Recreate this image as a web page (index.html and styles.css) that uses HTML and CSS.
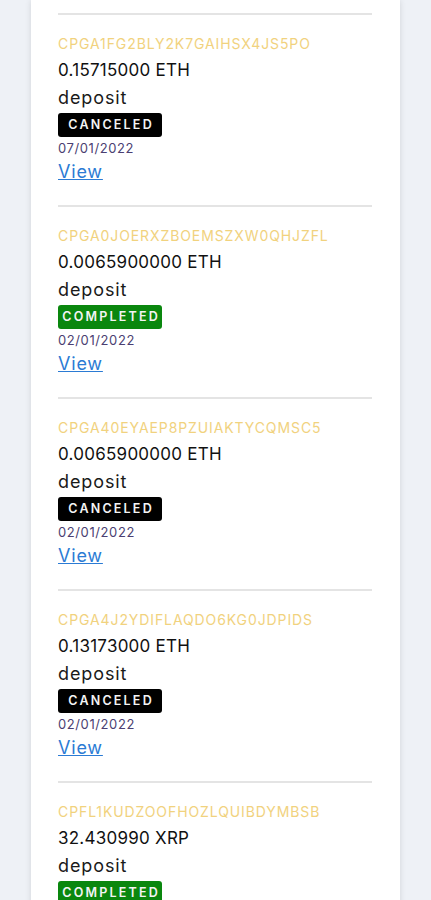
FILE: index.html
```html
<!DOCTYPE html>
<html lang="en">

<head>
    <meta charset="UTF-8">
    <meta name="viewport" content="width=device-width, initial-scale=1.0">
    <title>Transactions</title>
    <link rel="stylesheet" href="styles.css">
</head>

<body>

    <div class="card">
        <div class="tx">
            <div class="tx-id">CPGA1FG2BLY2K7GAIHSX4JS5PO</div>
            <div class="tx-amount">0.15715000 ETH</div>
            <div class="tx-type">deposit</div>
            <span class="badge canceled">CANCELED</span>
            <div class="tx-date">07/01/2022</div>
            <a class="tx-link" href="#">View</a>
        </div>

        <div class="tx">
            <div class="tx-id">CPGA0JOERXZBOEMSZXW0QHJZFL</div>
            <div class="tx-amount">0.0065900000 ETH</div>
            <div class="tx-type">deposit</div>
            <span class="badge completed">COMPLETED</span>
            <div class="tx-date">02/01/2022</div>
            <a class="tx-link" href="#">View</a>
        </div>

        <div class="tx">
            <div class="tx-id">CPGA40EYAEP8PZUIAKTYCQMSC5</div>
            <div class="tx-amount">0.0065900000 ETH</div>
            <div class="tx-type">deposit</div>
            <span class="badge canceled">CANCELED</span>
            <div class="tx-date">02/01/2022</div>
            <a class="tx-link" href="#">View</a>
        </div>

        <div class="tx">
            <div class="tx-id">CPGA4J2YDIFLAQDO6KG0JDPIDS</div>
            <div class="tx-amount">0.13173000 ETH</div>
            <div class="tx-type">deposit</div>
            <span class="badge canceled">CANCELED</span>
            <div class="tx-date">02/01/2022</div>
            <a class="tx-link" href="#">View</a>
        </div>

        <div class="tx">
            <div class="tx-id">CPFL1KUDZOOFHOZLQUIBDYMBSB</div>
            <div class="tx-amount">32.430990 XRP</div>
            <div class="tx-type">deposit</div>
            <span class="badge completed">COMPLETED</span>
            <div class="tx-date">02/01/2022</div>
            <a class="tx-link" href="#">View</a>
        </div>
    </div>

</body>

</html>
```

FILE: styles.css
```css
body {
    font-family: Inter, "Noto Sans", sans-serif;
    margin: 0;
    background-color: #eef1f6;
    height: 900px;
    overflow: hidden;
}

.card {
    background-color: #ffffff;
    margin-left: 31px;
    width: 369px;
    padding: 13px 28px 0 27px;
    box-sizing: border-box;
    box-shadow: 0 0 6px rgba(0, 0, 0, 0.12);
}

.tx {
    border-top: 2px solid #e4e4e4;
    padding: 17px 0 20px;
}

.tx-id {
    color: #f1d27e;
    font-size: 14px;
    letter-spacing: 0.9px;
    line-height: 24px;
}

.tx-amount {
    color: #111111;
    font-size: 17px;
    letter-spacing: 0.25px;
    line-height: 28px;
}

.tx-type {
    color: #1a1a1a;
    font-size: 18px;
    letter-spacing: 0.9px;
    line-height: 27px;
}

.badge {
    display: inline-block;
    width: 104px;
    margin-top: 2px;
    height: 24px;
    line-height: 24px;
    border-radius: 3px;
    text-align: center;
    color: #f4f4f4;
    font-size: 12.5px;
    font-weight: 600;
    letter-spacing: 2.2px;
    text-indent: 2.2px;
}

.canceled {
    background-color: #000000;
}

.completed {
    background-color: #0a870e;
}

.tx-date {
    color: #4b3f72;
    font-size: 13px;
    letter-spacing: 0.6px;
    line-height: 22px;
}

.tx-link {
    display: block;
    color: #2b7bd4;
    font-size: 18px;
    letter-spacing: 0.8px;
    line-height: 26px;
}
```
